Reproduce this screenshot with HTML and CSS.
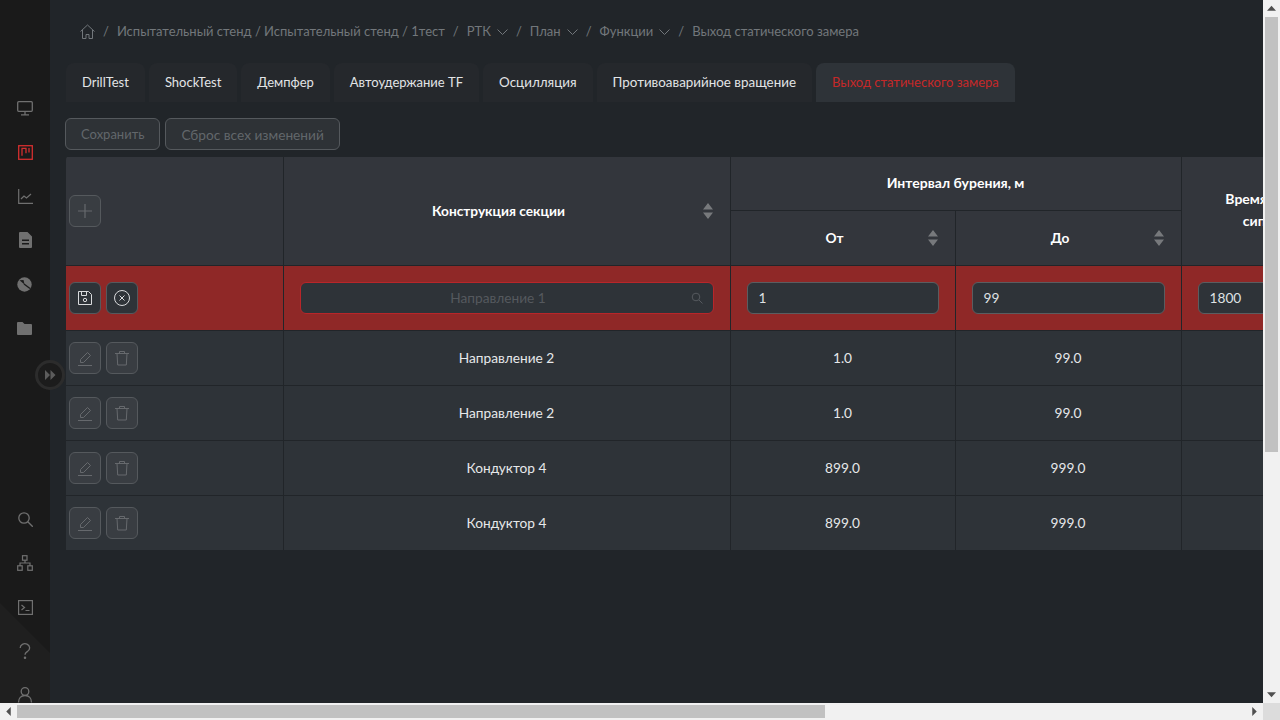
FILE: index.html
```html
<!DOCTYPE html>
<html lang="ru">
<head>
    <meta charset="UTF-8">
    <title>Выход статического замера</title>
    <link rel="stylesheet" href="styles.css">
</head>
<body>
<div class="frame">
    <div class="viewport">
        <nav class="sidebar">
            <div class="side-group">
                <a class="side-item"><svg width="16" height="16" viewBox="0 0 16 16" fill="none" stroke="currentColor" stroke-width="1.300"><rect x=".7" y="1.700" width="14.600" height="9.600" rx="1"/><path d="M8 11.500v3M4 14.800h8"/></svg></a>
                <a class="side-item side-active"><svg width="15" height="15" viewBox="0 0 15 15" fill="none" stroke="currentColor" stroke-width="1.300"><rect x=".7" y=".7" width="13.600" height="13.600"/><path d="M3.500 3.300h5M4 3.300v7.500M8 3.300v5M11 3v4.500"/></svg></a>
                <a class="side-item"><svg width="15" height="15" viewBox="0 0 15 15" fill="none" stroke="currentColor" stroke-width="1.200"><path d="M.7 0v14.300H15M3 10 6 7l2.500 2L13 5"/></svg></a>
                <a class="side-item"><svg width="13" height="16" viewBox="0 0 13 16"><path fill="currentColor" fill-rule="evenodd" d="M1 0h7.500L13 4.500V15a1 1 0 0 1-1 1H1a1 1 0 0 1-1-1V1a1 1 0 0 1 1-1zM3 7.500V9h7V7.500zM3 11v1.500h7V11z"/></svg></a>
                <a class="side-item side-left"><svg width="15" height="15" viewBox="0 0 15 15"><circle cx="7.500" cy="7.500" r="7.200" fill="currentColor"/><path d="M2.500 3.300 6.500 3 7.500 7.500z" fill="#1b1b1b"/><path d="M7 7l6 4.500" stroke="#1b1b1b" stroke-width="1.400" fill="none"/></svg></a>
                <a class="side-item side-left"><svg width="15" height="13" viewBox="0 0 15 13"><path fill="currentColor" d="M1 0h4.500l2 2H14a1 1 0 0 1 1 1v9a1 1 0 0 1-1 1H1a1 1 0 0 1-1-1V1a1 1 0 0 1 1-1z"/></svg></a>
            </div>
            <div class="side-group">
                <a class="side-item"><svg width="15" height="15" viewBox="0 0 15 15" fill="none" stroke="currentColor" stroke-width="1.300"><circle cx="6" cy="6" r="5.200"/><path d="M9.800 9.800l5 5"/></svg></a>
                <a class="side-item"><svg width="16" height="16" viewBox="0 0 16 16" fill="none" stroke="currentColor" stroke-width="1.200"><rect x="5.500" y=".7" width="4.500" height="4.500"/><rect x=".7" y="10.800" width="4.500" height="4.500"/><rect x="10.800" y="10.800" width="4.500" height="4.500"/><path d="M8 5v3M3 11V8h10v3"/></svg></a>
                <a class="side-item"><svg width="15" height="15" viewBox="0 0 15 15" fill="none" stroke="currentColor" stroke-width="1.200"><rect x=".6" y=".6" width="13.800" height="13.800"/><path d="M3.500 5 6.500 7.500 3.500 10M7.500 10.500h4"/></svg></a>
                <a class="side-item"><svg width="12" height="16" viewBox="0 0 12 16" fill="none" stroke="currentColor" stroke-width="1.300"><path d="M1.200 5a4.700 4.200 0 1 1 7.500 3.300C7 9.500 6 10 6 11.800"/><circle cx="6" cy="14.800" r=".6" fill="currentColor"/></svg></a>
                <a class="side-item"><svg width="16" height="16" viewBox="0 0 16 16" fill="none" stroke="currentColor" stroke-width="1.300"><circle cx="8" cy="4.500" r="3.800"/><path d="M1.500 15.500c0-4 2.500-7 6.500-7s6.500 3 6.500 7"/></svg></a>
            </div>
        </nav>
        <button class="collapse-btn"><svg width="12" height="10" viewBox="0 0 12 10"><path fill="currentColor" d="M1 0l5 5-5 5zM6.500 0l5 5-5 5z"/></svg></button>

        <main class="content">
            <div class="crumbs">
                <svg class="crumb-home" width="15" height="15" viewBox="0 0 15 15" fill="none" stroke="currentColor"><path d="M.5 7.500 7.500 1l7 6.500M2.500 5.800v8.700h3.500v-4h3v4h3.500V5.800"/></svg>
                <span>/</span>
                <span>Испытательный стенд / Испытательный стенд / 1тест</span>
                <span>/</span>
                <span class="crumb-drop">РТК<svg width="11" height="6" viewBox="0 0 11 6" fill="none" stroke="currentColor"><path d="M.5.500l5 5 5-5"/></svg></span>
                <span>/</span>
                <span class="crumb-drop">План<svg width="11" height="6" viewBox="0 0 11 6" fill="none" stroke="currentColor"><path d="M.5.500l5 5 5-5"/></svg></span>
                <span>/</span>
                <span class="crumb-drop">Функции<svg width="11" height="6" viewBox="0 0 11 6" fill="none" stroke="currentColor"><path d="M.5.500l5 5 5-5"/></svg></span>
                <span>/</span>
                <span>Выход статического замера</span>
            </div>

            <div class="tabs">
                <a class="tab">DrillTest</a>
                <a class="tab">ShockTest</a>
                <a class="tab">Демпфер</a>
                <a class="tab">Автоудержание TF</a>
                <a class="tab tab-wide">Осцилляция</a>
                <a class="tab tab-wide">Противоаварийное вращение</a>
                <a class="tab tab-active">Выход статического замера</a>
            </div>

            <div class="actions">
                <button class="btn btn-short">Сохранить</button>
                <button class="btn">Сброс всех изменений</button>
            </div>

            <div class="table-wrap">
                <table class="grid-table">
                    <colgroup>
                        <col class="col-tools">
                        <col class="col-name">
                        <col class="col-from">
                        <col class="col-num">
                        <col class="col-num">
                    </colgroup>
                    <thead>
                        <tr class="head-top">
                            <th rowspan="2" class="cell-tools">
                                <button class="icon-btn"><svg width="16" height="16" viewBox="0 0 16 16" fill="none" stroke="currentColor" stroke-width="1.200"><path d="M8 1v14M1 8h14"/></svg></button>
                            </th>
                            <th rowspan="2" class="sortable">Конструкция секции<svg class="sort" width="10" height="16" viewBox="0 0 10 16"><path fill="currentColor" d="M5 0l5 6.500H0zM5 16 0 9.500h10z"/></svg></th>
                            <th colspan="2">Интервал бурения, м</th>
                            <th rowspan="2" class="cell-wrap">Время стабилизации<br>сипа на забое, с</th>
                        </tr>
                        <tr>
                            <th class="sortable">От<svg class="sort" width="10" height="16" viewBox="0 0 10 16"><path fill="currentColor" d="M5 0l5 6.500H0zM5 16 0 9.500h10z"/></svg></th>
                            <th class="sortable">До<svg class="sort" width="10" height="16" viewBox="0 0 10 16"><path fill="currentColor" d="M5 0l5 6.500H0zM5 16 0 9.500h10z"/></svg></th>
                        </tr>
                    </thead>
                    <tbody>
                        <tr class="row-edit">
                            <td class="cell-tools">
                                <div class="tools">
                                    <button class="icon-btn icon-btn-on"><svg width="16" height="16" viewBox="0 0 16 16" fill="none" stroke="currentColor"><path d="M1.500 1.500h10l3 3v10h-13zM4.500 1.500v4h5v-4"/><circle cx="8" cy="10" r="1.700"/></svg></button>
                                    <button class="icon-btn icon-btn-on"><svg width="16" height="16" viewBox="0 0 16 16" fill="none" stroke="currentColor"><circle cx="8" cy="8" r="7.500"/><path d="M5.500 5.500l5 5M10.500 5.500l-5 5"/></svg></button>
                                </div>
                            </td>
                            <td>
                                <div class="field field-select">
                                    <span class="placeholder">Направление 1</span>
                                    <svg class="field-search" width="12" height="12" viewBox="0 0 12 12" fill="none" stroke="currentColor"><circle cx="5" cy="5" r="3.800"/><path d="M8 8l3.500 3.500"/></svg>
                                </div>
                            </td>
                            <td><div class="field">1</div></td>
                            <td><div class="field">99</div></td>
                            <td><div class="field">1800</div></td>
                        </tr>
                        <tr>
                            <td class="cell-tools"><div class="tools">
                                <button class="icon-btn"><svg width="16" height="16" viewBox="0 0 16 16" fill="none" stroke="currentColor"><path d="M1 15.500h14M3.500 12.500v-3L10.500 2.500l3 3-7 7z"/></svg></button>
                                <button class="icon-btn"><svg width="16" height="16" viewBox="0 0 16 16" fill="none" stroke="currentColor"><path d="M1 3.500h14M5.500 3.500V1.500h5v2M3 3.500l.7 11.500h8.600L13 3.500"/></svg></button>
                            </div></td>
                            <td>Направление 2</td><td>1.0</td><td>99.0</td><td>1800</td>
                        </tr>
                        <tr>
                            <td class="cell-tools"><div class="tools">
                                <button class="icon-btn"><svg width="16" height="16" viewBox="0 0 16 16" fill="none" stroke="currentColor"><path d="M1 15.500h14M3.500 12.500v-3L10.500 2.500l3 3-7 7z"/></svg></button>
                                <button class="icon-btn"><svg width="16" height="16" viewBox="0 0 16 16" fill="none" stroke="currentColor"><path d="M1 3.500h14M5.500 3.500V1.500h5v2M3 3.500l.7 11.500h8.600L13 3.500"/></svg></button>
                            </div></td>
                            <td>Направление 2</td><td>1.0</td><td>99.0</td><td>1800</td>
                        </tr>
                        <tr>
                            <td class="cell-tools"><div class="tools">
                                <button class="icon-btn"><svg width="16" height="16" viewBox="0 0 16 16" fill="none" stroke="currentColor"><path d="M1 15.500h14M3.500 12.500v-3L10.500 2.500l3 3-7 7z"/></svg></button>
                                <button class="icon-btn"><svg width="16" height="16" viewBox="0 0 16 16" fill="none" stroke="currentColor"><path d="M1 3.500h14M5.500 3.500V1.500h5v2M3 3.500l.7 11.500h8.600L13 3.500"/></svg></button>
                            </div></td>
                            <td>Кондуктор 4</td><td>899.0</td><td>999.0</td><td>1800</td>
                        </tr>
                        <tr>
                            <td class="cell-tools"><div class="tools">
                                <button class="icon-btn"><svg width="16" height="16" viewBox="0 0 16 16" fill="none" stroke="currentColor"><path d="M1 15.500h14M3.500 12.500v-3L10.500 2.500l3 3-7 7z"/></svg></button>
                                <button class="icon-btn"><svg width="16" height="16" viewBox="0 0 16 16" fill="none" stroke="currentColor"><path d="M1 3.500h14M5.500 3.500V1.500h5v2M3 3.500l.7 11.500h8.600L13 3.500"/></svg></button>
                            </div></td>
                            <td>Кондуктор 4</td><td>899.0</td><td>999.0</td><td>1800</td>
                        </tr>
                    </tbody>
                </table>
            </div>
        </main>
    </div>

    <div class="vbar">
        <span class="arrow arrow-up"></span>
        <div class="vtrack"><div class="vthumb"></div></div>
        <span class="arrow arrow-down"></span>
    </div>
    <div class="hbar">
        <span class="arrow arrow-left"></span>
        <div class="htrack"><div class="hthumb"></div></div>
        <span class="arrow arrow-right"></span>
    </div>
    <div class="corner"></div>
</div>
</body>
</html>
```
FILE: styles.css
```css
* {
    box-sizing: border-box;
}

body {
    margin: 0;
    background: #212529;
    font-family: "Lato", "Noto Sans", sans-serif;
    font-size: 14px;
    color: #e6e8ea;
}

button {
    font-family: inherit;
}

.frame {
    display: grid;
    grid-template-columns: 1263px 17px;
    grid-template-rows: 703px 17px;
    width: 1280px;
    height: 720px;
    overflow: hidden;
}

.viewport {
    position: relative;
    display: flex;
    overflow: hidden;
    background: #212529;
}

/* sidebar */
.sidebar {
    display: flex;
    flex: 0 0 50px;
    flex-direction: column;
    justify-content: space-between;
    height: 717px;
    padding-top: 86px;
    color: #707070;
    background: #1a1a1a;
}

.sidebar::after {
    content: "";
    position: absolute;
    left: 0;
    top: 603px;
    width: 50px;
    height: 100px;
    background: #1f1f1f;
    clip-path: polygon(0 0, 100% 50px, 100% 100%, 0 100%);
}

.side-group {
    position: relative;
    z-index: 1;
    display: flex;
    flex-direction: column;
}

.side-item {
    display: flex;
    align-items: center;
    justify-content: center;
    height: 44px;
}

.side-left {
    padding-right: 2px;
}

.side-active {
    color: #d32f2f;
}

.collapse-btn {
    position: absolute;
    left: 35px;
    top: 360px;
    z-index: 2;
    display: flex;
    align-items: center;
    justify-content: center;
    width: 30px;
    height: 30px;
    padding: 0;
    border: 3px solid #2c2c2c;
    border-radius: 50%;
    color: #5c5c5c;
    background: #1c1c1c;
}

/* main */
.content {
    flex: 1;
    min-width: 0;
    padding: 0 0 0 16px;
    overflow: hidden;
}

.crumbs {
    display: flex;
    align-items: center;
    gap: 8px;
    height: 62px;
    margin-bottom: 1px;
    padding-left: 14px;
    font-size: 13px;
    white-space: nowrap;
    color: #72777b;
}

.crumb-drop {
    display: flex;
    align-items: center;
    gap: 6px;
}

.crumb-drop svg {
    margin-top: 1px;
}

.tabs {
    display: flex;
    gap: 4px;
    height: 39px;
}

.tab {
    display: flex;
    align-items: center;
    padding: 0 16px 1px;
    border-radius: 8px 8px 0 0;
    font-size: 13px;
    white-space: nowrap;
    color: #e2e4e6;
    background: #25282c;
}

.tab-wide {
    font-size: 13.400px;
}

.tab-active {
    color: #c62828;
    background: #2e3338;
}

.actions {
    display: flex;
    gap: 5px;
    height: 54px;
    margin-left: -1px;
    padding: 16px 0 6px;
}

.btn {
    height: 32px;
    padding: 0 15px;
    border: 1px solid #55595d;
    border-radius: 6px;
    font-size: 13.700px;
    color: #62676b;
    background: #2e3236;
}

.btn-short {
    font-size: 13px;
}

.table-wrap {
    overflow: hidden;
    border-top-left-radius: 4px;
}

.grid-table {
    width: 1341px;
    border-collapse: collapse;
    table-layout: fixed;
    font-size: 13.700px;
}

.col-tools {
    width: 217px;
}

.col-name {
    width: 447px;
}

.col-from {
    width: 225px;
}

.col-num {
    width: 226px;
}

.grid-table th,
.grid-table td {
    border: 1px solid #212529;
    padding: 0 16px 2px;
    text-align: center;
}

.grid-table tr > :first-child {
    border-left: 0;
}

.head-top > * {
    border-top: 0;
}

.grid-table th {
    position: relative;
    height: 55px;
    font-size: 14px;
    font-weight: 700;
    color: #fff;
    background: #33363c;
}

.grid-table .sortable {
    padding-right: 32px;
    font-size: 13.700px;
}

.grid-table .head-top > th {
    height: 54px;
}

.grid-table td {
    height: 55px;
    background: #2e3338;
}

.grid-table .cell-tools {
    padding: 0 3px;
    text-align: left;
}

.cell-wrap {
    line-height: 22px;
}

.sort {
    position: absolute;
    right: 17px;
    top: 50%;
    margin-top: -8px;
    color: #77797c;
}

.grid-table .row-edit td {
    height: 65px;
    padding-bottom: 0;
    background: #8f2827;
}

.tools {
    display: flex;
    gap: 5px;
}

.icon-btn {
    display: flex;
    align-items: center;
    justify-content: center;
    width: 32px;
    height: 32px;
    padding: 0;
    border: 1px solid #55595d;
    border-radius: 6px;
    color: #66696d;
    background: #393d42;
}

.icon-btn-on {
    color: #d8dadc;
    background: #2e3338;
}

.field {
    position: relative;
    height: 32px;
    padding: 0 11px;
    border: 1px solid #5a5d60;
    border-radius: 6px;
    line-height: 30px;
    text-align: left;
    color: #dfe1e3;
    background: #2e3338;
}

.field-select {
    padding-right: 28px;
    border-color: #b8262a;
    text-align: center;
}

.placeholder {
    color: #55595e;
}

.field-search {
    position: absolute;
    right: 10px;
    top: 9px;
    color: #55595e;
}

/* scrollbars */
.vbar,
.hbar {
    display: flex;
    background: #f1f1f1;
}

.vbar {
    flex-direction: column;
}

.vtrack {
    flex: 1;
    padding: 0 2px;
}

.vthumb {
    height: 435px;
    background: #c1c1c1;
}

.htrack {
    flex: 1;
    padding: 2px 0;
}

.hthumb {
    width: 808px;
    height: 13px;
    background: #c1c1c1;
}

.corner {
    background: #dcdcdc;
}

.arrow {
    position: relative;
    flex: 0 0 17px;
    height: 17px;
}

.arrow::before {
    content: "";
    position: absolute;
    left: 4px;
    top: 4px;
    width: 9px;
    height: 9px;
    background: #505050;
}

.arrow-up::before {
    clip-path: polygon(50% 20%, 100% 75%, 0 75%);
}

.arrow-down::before {
    clip-path: polygon(0 25%, 100% 25%, 50% 80%);
}

.arrow-left::before {
    clip-path: polygon(25% 50%, 75% 0, 75% 100%);
}

.arrow-right::before {
    clip-path: polygon(25% 0, 75% 50%, 25% 100%);
}
```
